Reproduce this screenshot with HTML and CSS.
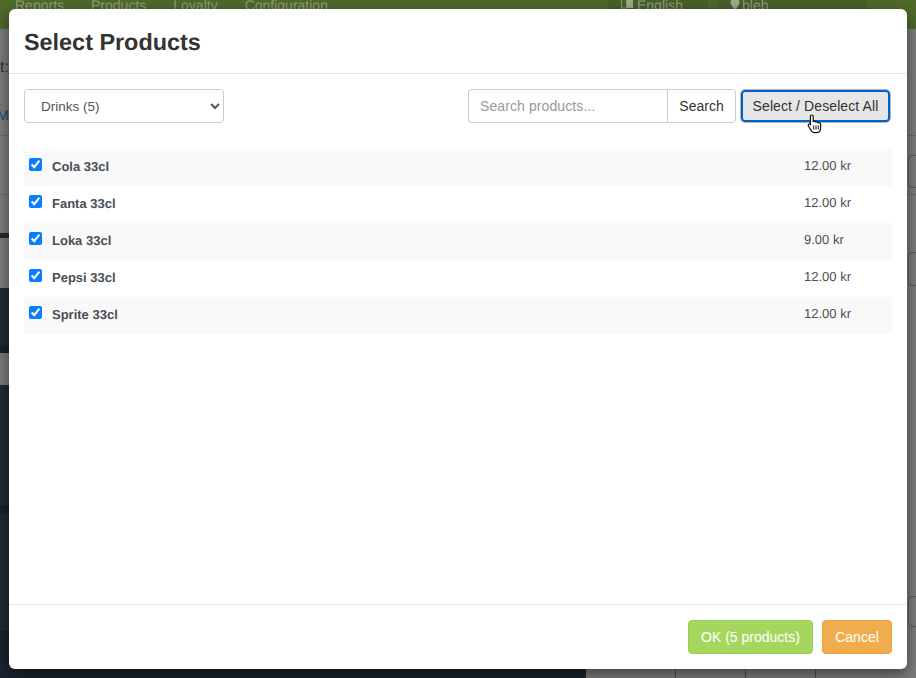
FILE: index.html
```html
<!DOCTYPE html>
<html lang="en">
<head>
<meta charset="utf-8">
<title>Select Products</title>
<link rel="stylesheet" href="styles.css">
</head>
<body>
<div class="backdrop">
  <div class="topnav">
    <div class="nav-left"><span>Reports</span><span>Products</span><span>Loyalty</span><span>Configuration</span></div>
    <div class="nav-right">
      <span class="nav-pill">
        <svg class="nav-icon" width="12" height="12" viewBox="0 0 12 12"><path d="M.5 1h5v9h-5z" fill="none" stroke="#8c9c78"/><path d="M6 0h6v10H6z" fill="#9dac8a"/></svg>
        English
      </span>
      <span class="nav-pill nav-pill-wide">
        <svg class="nav-icon" width="10" height="12" viewBox="0 0 10 12"><path d="M5 0C2.200 0 .5 2 .5 4.200.5 7 5 12 5 12s4.500-5 4.500-7.800C9.500 2 7.800 0 5 0z" fill="#9dac8a"/></svg>
        bleb
      </span>
    </div>
  </div>
  <div class="under under-a">
    <span class="peek peek-t">t:</span>
    <span class="peek peek-m">Mo</span>
    <i class="rule rule-1"></i>
    <i class="rule rule-2"></i>
    <i class="sliver"></i>
    <i class="box box-1"></i>
    <i class="box box-2"></i>
  </div>
  <div class="under under-dark"></div>
  <div class="under under-b"></div>
  <div class="under under-c"></div>
  <i class="box box-3"></i>
  <i class="cell cell-1"></i>
  <i class="cell cell-2"></i>
  <i class="cell cell-3"></i>
</div>
<div class="modal">
  <header class="modal-head"><h1>Select Products</h1></header>
  <div class="modal-body">
    <div class="toolbar">
      <select class="category"><option>Drinks (5)</option></select>
      <div class="tools">
        <div class="search">
          <input type="text" placeholder="Search products...">
          <button type="button">Search</button>
        </div>
        <div class="focus-wrap">
          <button type="button" class="toggle">Select / Deselect All</button>
          <svg class="cursor" width="15" height="20" viewBox="0 0 15 20"><path d="M4.600 1C5.600 1 6.200 1.700 6.200 2.600V7.400C7.200 7 8.200 7.200 8.700 8 9.600 7.600 10.600 7.900 11 8.700 12 8.300 13.600 8.900 13.600 10.400V14C13.600 16.800 12 18.600 9.600 18.600H7.600C6.200 18.600 5.200 18 4.400 16.800L1.400 12C.6 10.700 2.200 9.300 3.400 10.400V2.600C3.400 1.700 3.800 1 4.600 1Z" fill="#fff" stroke="#111" stroke-width="1.200"/><path d="M6.700 11.500v4M9 11.500v4M11.300 11.500v4" stroke="#111" stroke-width="1" fill="none"/></svg>
        </div>
      </div>
    </div>
    <ul class="products">
      <li class="row"><label class="name"><input type="checkbox" checked>Cola 33cl</label><span class="price">12.00 kr</span></li>
      <li class="row"><label class="name"><input type="checkbox" checked>Fanta 33cl</label><span class="price">12.00 kr</span></li>
      <li class="row"><label class="name"><input type="checkbox" checked>Loka 33cl</label><span class="price">9.00 kr</span></li>
      <li class="row"><label class="name"><input type="checkbox" checked>Pepsi 33cl</label><span class="price">12.00 kr</span></li>
      <li class="row"><label class="name"><input type="checkbox" checked>Sprite 33cl</label><span class="price">12.00 kr</span></li>
    </ul>
  </div>
  <footer class="modal-foot">
    <button type="button" class="ok">OK (5 products)</button>
    <button type="button" class="cancel">Cancel</button>
  </footer>
</div>
</body>
</html>
```

FILE: styles.css
```css
* { box-sizing: border-box; }
html, body { margin: 0; height: 100%; }
body {
  position: relative;
  width: 916px;
  height: 678px;
  overflow: hidden;
  font-family: "Liberation Sans", Arial, sans-serif;
  text-rendering: geometricPrecision;
  color: #333;
  background: #7d7d7d;
}
.backdrop { position: absolute; inset: 0; overflow: hidden; }
.topnav {
  height: 29px;
  background: #4f6a2b;
  color: #8f9f7d;
  font-size: 14px;
  display: flex;
  justify-content: space-between;
  align-items: flex-start;
  padding: 0 0 0 15px;
  line-height: 10px;
}
.nav-left { display: flex; gap: 27px; }
.nav-right { display: flex; gap: 10px; margin-right: 49px; }
.nav-pill { width: 100px; height: 29px; padding-left: 13px; background: #486029; display: flex; gap: 4px; align-items: flex-start; }
.nav-pill-wide { width: 149px; padding-left: 12px; gap: 2px; }
.nav-icon { flex: none; margin-top: -2px; }
.under { position: absolute; left: 0; }
.under-a { top: 29px; width: 100%; height: 259px; background: #7d7d7d; }
.under-dark { top: 288px; width: 586px; height: 65px; background: linear-gradient(#1f2b36 0 90%, #18222c 90%); }
.under-b { top: 353px; width: 586px; height: 32px; background: #7a7a7a; }
.under-c {
  top: 385px;
  width: 586px;
  height: 293px;
  background: linear-gradient(#1f2b36 0 41%, #18222c 41% 44%, #1f2b36 44% 84%, #18222c 84% 87%, #1a242e 87%);
}
.peek { position: absolute; }
.peek-t { left: 0; top: 30px; font-size: 16px; color: #2f2f2f; }
.peek-m { left: -3px; top: 78px; font-size: 14px; color: #1c4a75; }
.rule { position: absolute; left: 0; width: 100%; height: 1px; background: #6a6a6a; }
.rule-1 { top: 165px; }
.rule-2 { top: 106px; }
.sliver { position: absolute; left: 0; top: 204px; width: 100px; height: 5px; background: #1f2b36; }
.box { position: absolute; left: 908px; width: 24px; border: 1px solid #5c5c5c; border-radius: 4px; }
.box-1 { top: 126px; height: 33px; }
.box-2 { top: 223px; height: 34px; }
.box-3 { top: 596px; height: 31px; }
.cell { position: absolute; top: 669px; width: 1px; height: 9px; background: #4c4c4c; }
.cell-1 { left: 675px; }
.cell-2 { left: 745px; }
.cell-3 { left: 815px; }

.modal {
  position: absolute;
  left: 9px;
  top: 9px;
  width: 898px;
  height: 660px;
  background: #fff;
  border-radius: 6px;
  display: flex;
  flex-direction: column;
  box-shadow: 0 5px 15px rgba(0,0,0,.5);
}
.modal-head {
  height: 65px;
  border-bottom: 1px solid #e5e5e5;
  padding: 3px 15px 0;
  display: flex;
  align-items: center;
}
.modal-head h1 { margin: 0; font-size: 23.4px; font-weight: 700; color: #333; line-height: 1; }
.modal-body { flex: 1; padding: 15px 15px 0; }
.toolbar { display: flex; justify-content: space-between; align-items: center; height: 34px; }
.category {
  width: 200px;
  height: 34px;
  font: 13.5px "Liberation Sans", Arial, sans-serif;
  color: #555;
  background: #fff;
  border: 1px solid #ccc;
  border-radius: 4px;
  padding: 0 12px;
}
.tools { display: flex; gap: 5px; align-items: center; margin-right: 2px; }
.search { display: flex; }
.search input {
  width: 199px;
  height: 34px;
  border: 1px solid #ccc;
  border-right: 0;
  border-radius: 4px 0 0 4px;
  padding: 0 11px;
  font: 14px "Liberation Sans", Arial, sans-serif;
  letter-spacing: .1px;
  color: #555;
}
.search input::placeholder { color: #999; opacity: 1; }
.search button {
  width: 69px;
  height: 34px;
  border: 1px solid #ccc;
  border-radius: 0 4px 4px 0;
  background: #fff;
  color: #333;
  font: 14px "Liberation Sans", Arial, sans-serif;
  padding: 0;
}
.focus-wrap { position: relative; }
.toggle {
  display: block;
  width: 149px;
  height: 32px;
  border: 2px solid #0060d0;
  outline: 1px solid #b4b4b4;
  outline-offset: 0;
  border-radius: 4px;
  background: #e6e6e6;
  color: #333;
  font: 14px "Liberation Sans", Arial, sans-serif;
  letter-spacing: .1px;
  padding: 0;
}
.cursor { position: absolute; left: 66px; top: 24px; }
.products { list-style: none; margin: 26px 0 0; padding: 0; }
.row {
  height: 37px;
  padding-left: 5px;
  padding-bottom: 4px;
  display: flex;
  align-items: center;
  font-size: 13px;
  color: #4a4d55;
}
.row:nth-child(odd) { background: #f9f9f9; }
.name { display: flex; align-items: center; font-weight: 700; flex: 1; padding-top: 1px; }
.name input {
  width: 13px;
  height: 13px;
  margin: -4px 10px 0 0;
  accent-color: #0a7cff;
}
.price { width: 88px; color: #4a4d55; font-size: 13px; }
.modal-foot {
  height: 65px;
  border-top: 1px solid #e5e5e5;
  padding: 15px;
  display: flex;
  justify-content: flex-end;
  gap: 9px;
}
.modal-foot button {
  height: 34px;
  border-radius: 4px;
  color: #fff;
  font: 14px "Liberation Sans", Arial, sans-serif;
  padding: 0;
}
.ok { width: 125px; background: #a5d75f; border: 1px solid #9bcf55; }
.cancel { width: 70px; background: #f0ad4e; border: 1px solid #eea236; }
```
